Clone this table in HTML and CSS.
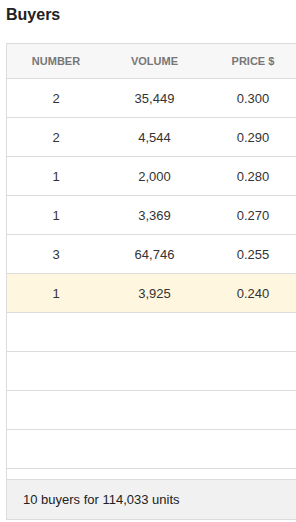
FILE: index.html
```html
<!DOCTYPE html>
<html>
<head>
<meta charset="utf-8">
<link rel="stylesheet" href="styles.css">
</head>
<body>
<div class="panel">
  <h2 class="title">Buyers</h2>
  <div class="book">
    <div class="row head">
      <div class="cell">Number</div>
      <div class="cell">Volume</div>
      <div class="cell">Price $</div>
    </div>
    <div class="body">
      <div class="row"><div class="cell">2</div><div class="cell">35,449</div><div class="cell">0.300</div></div>
      <div class="row"><div class="cell">2</div><div class="cell">4,544</div><div class="cell">0.290</div></div>
      <div class="row"><div class="cell">1</div><div class="cell">2,000</div><div class="cell">0.280</div></div>
      <div class="row"><div class="cell">1</div><div class="cell">3,369</div><div class="cell">0.270</div></div>
      <div class="row"><div class="cell">3</div><div class="cell">64,746</div><div class="cell">0.255</div></div>
      <div class="row mine"><div class="cell">1</div><div class="cell">3,925</div><div class="cell">0.240</div></div>
      <div class="row"><div class="cell"></div><div class="cell"></div><div class="cell"></div></div>
      <div class="row"><div class="cell"></div><div class="cell"></div><div class="cell"></div></div>
      <div class="row"><div class="cell"></div><div class="cell"></div><div class="cell"></div></div>
      <div class="row"><div class="cell"></div><div class="cell"></div><div class="cell"></div></div>
      <div class="row"><div class="cell"></div><div class="cell"></div><div class="cell"></div></div>
    </div>
    <div class="foot">10 buyers for 114,033 units</div>
  </div>
</div>
</body>
</html>
```
FILE: styles.css
```css
html, body {
  margin: 0;
  padding: 0;
  background: #fff;
  overflow: hidden;
}
body {
  font-family: "Liberation Sans", Arial, sans-serif;
  color: #333;
}
.panel {
  padding: 6px 0 0 6px;
}
.title {
  margin: 0 0 19px 0;
  font-size: 16px;
  line-height: 18px;
  font-weight: bold;
  color: #222;
}
.book {
  width: 290px;
  overflow: hidden;
  border-left: 1px solid #dcdcdc;
  border-top: 1px solid #dcdcdc;
  border-bottom: 1px solid #dcdcdc;
}
.row {
  display: grid;
  grid-template-columns: 98px 99px 98px;
  height: 38px;
  border-bottom: 1px solid #dcdcdc;
  font-size: 13px;
}
.cell {
  display: flex;
  align-items: center;
  justify-content: center;
  white-space: nowrap;
}
.head {
  height: 34px;
  background: #f7f7f7;
  font-size: 11px;
  font-weight: bold;
  text-transform: uppercase;
  color: #777;
}
.body {
  height: 400px;
  overflow: hidden;
}
.mine {
  background: #fff6df;
}
.foot {
  height: 39px;
  border-top: 1px solid #dcdcdc;
  background: #f1f1f1;
  display: flex;
  align-items: center;
  padding-left: 16px;
  font-size: 13px;
  color: #222;
}
```
